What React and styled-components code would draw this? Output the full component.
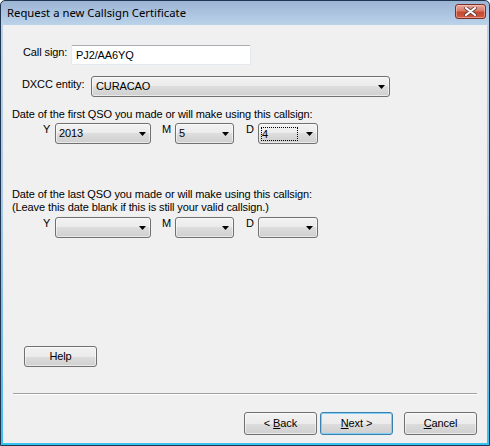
import React from 'react'
import styled, { createGlobalStyle, css } from 'styled-components'

const GlobalStyle = createGlobalStyle`
    html, body {
        margin: 0;
        padding: 0;
        background: #fff;
    }
    * {
        box-sizing: border-box;
    }
`

const Window = styled.div`
    width: 490px;
    height: 446px;
    display: flex;
    flex-direction: column;
    border: 1px solid #1f3550;
    border-radius: 5px 5px 0 0;
    overflow: hidden;
    background: linear-gradient(
        to bottom,
        #9cb5d4 0px,
        #bbd2ea 24px,
        #a8c9e6 45%,
        #6fb8e6 80%,
        #36c2ef 100%
    );
`

const TitleBar = styled.div`
    flex: none;
    height: 24px;
    display: flex;
    align-items: flex-start;
    justify-content: space-between;
    padding: 0 3px 0 6px;
`

const Title = styled.div`
    font-family: 'Noto Sans', 'Open Sans', sans-serif;
    font-size: 11.3px;
    line-height: 16px;
    margin-top: 4px;
    color: #000;
`

const CloseButton = styled.div`
    width: 31px;
    height: 15px;
    margin-top: 3px;
    display: flex;
    align-items: center;
    justify-content: center;
    border: 1px solid #7a2e25;
    border-radius: 3px;
    background: linear-gradient(to bottom, #e9a99b 0%, #d87a69 45%, #c8472f 55%, #cf5b45 100%);
    box-shadow: inset 0 0 0 1px rgba(255, 220, 210, 0.45);
`

const Body = styled.div`
    flex: 1;
    margin: 0 2px 2px;
    display: flex;
    flex-direction: column;
    background: #f0f0f0;
    font-family: 'Liberation Sans', Arial, sans-serif;
    font-size: 11px;
    line-height: 13px;
    letter-spacing: -0.1px;
    color: #000;
`

const FieldRow = styled.div`
    display: flex;
    align-items: flex-start;
    margin-top: ${(p) => p.$top}px;
    margin-left: ${(p) => p.$left}px;
`

const Label = styled.div`
    flex: none;
    width: ${(p) => p.$width}px;
    padding-top: ${(p) => p.$pad || 0}px;
    white-space: nowrap;
`

const Heading = styled.div`
    margin-top: ${(p) => p.$top}px;
    margin-left: 9px;
    white-space: nowrap;
`

const TextBox = styled.div`
    width: ${(p) => p.$width}px;
    height: 20px;
    display: flex;
    align-items: center;
    padding-left: 4px;
    background: #fff;
    border: 1px solid #e3e9ef;
    border-top-color: #abadb3;
    border-radius: 2px;
`

const win7Face = css`
    border: 1px solid #707070;
    border-radius: 3px;
    background: linear-gradient(to bottom, #f2f2f2 0%, #ebebeb 50%, #dddddd 50%, #cfcfcf 100%);
    box-shadow: inset 0 0 0 1px rgba(255, 255, 255, 0.55);
`

const Combo = styled.div`
    ${win7Face}
    flex: none;
    width: ${(p) => p.$width}px;
    height: 21px;
    display: flex;
    align-items: center;
    justify-content: space-between;
    padding: 0 4px 0 ${(p) => p.$pad}px;
`

const ComboValue = styled.div`
    white-space: nowrap;
    ${(p) =>
        p.$focus &&
        css`
            align-self: stretch;
            width: 37px;
            margin: 3px 0 2px -1px;
            border: 1px dotted #000;
            line-height: 13px;
            padding-left: 0;
        `}
`

const Arrow = () => (
    <svg width="7" height="4" viewBox="0 0 7 4">
        <path d="M0 0H7L3.5 4Z" fill="#000" />
    </svg>
)

const DateLabel = styled.div`
    flex: none;
    width: ${(p) => p.$width}px;
    margin-left: ${(p) => p.$gap || 0}px;
`

const Footer = styled.div`
    margin-top: auto;
    display: flex;
    flex-direction: column;
`

const Button = styled.div`
    ${win7Face}
    width: ${(p) => p.$width || 73}px;
    height: ${(p) => p.$height || 23}px;
    display: flex;
    align-items: center;
    justify-content: center;
    margin-left: ${(p) => p.$gap || 0}px;
    ${(p) =>
        p.$default &&
        css`
            border-color: #3c7fb1;
            box-shadow: inset 0 0 0 1px #7fd0f4;
        `}
`

const HelpRow = styled.div`
    display: flex;
    margin-left: 21px;
`

const Separator = styled.div`
    margin: 26px 10px 0;
    height: 2px;
    border-top: 1px solid #a0a0a0;
    border-bottom: 1px solid #ffffff;
`

const ButtonRow = styled.div`
    display: flex;
    justify-content: flex-end;
    margin-top: 17px;
    padding: 0 10px 8px 0;
`

const DateRow = ({ top, y, m, d, focusDay }) => (
    <FieldRow $top={top} $left={40}>
        <DateLabel $width={12}>Y</DateLabel>
        <Combo $width={96} $pad={3}>
            <ComboValue>{y}</ComboValue>
            <Arrow />
        </Combo>
        <DateLabel $width={13} $gap={11}>M</DateLabel>
        <Combo $width={59} $pad={3}>
            <ComboValue>{m}</ComboValue>
            <Arrow />
        </Combo>
        <DateLabel $width={12} $gap={12}>D</DateLabel>
        <Combo $width={60} $pad={3}>
            <ComboValue $focus={focusDay}>{d}</ComboValue>
            <Arrow />
        </Combo>
    </FieldRow>
)

const App = () => {
    return (
        <>
            <GlobalStyle />
            <Window>
                <TitleBar>
                    <Title>Request a new Callsign Certificate</Title>
                    <CloseButton>
                        <svg width="13" height="9" viewBox="0 0 13 9">
                            <path
                                d="M2 1L11 8M11 1L2 8"
                                stroke="#5a3a36"
                                strokeWidth="3.6"
                                strokeLinecap="round"
                            />
                            <path
                                d="M2 1L11 8M11 1L2 8"
                                stroke="#ffffff"
                                strokeWidth="2.2"
                                strokeLinecap="round"
                            />
                        </svg>
                    </CloseButton>
                </TitleBar>
                <Body>
                    <FieldRow $top={20} $left={20}>
                        <Label $width={48} $pad={1}>
                            Call sign:
                        </Label>
                        <TextBox $width={180}>PJ2/AA6YQ</TextBox>
                    </FieldRow>
                    <FieldRow $top={11} $left={19}>
                        <Label $width={69} $pad={2}>
                            DXCC entity:
                        </Label>
                        <Combo $width={299} $pad={4}>
                            <ComboValue>CURACAO</ComboValue>
                            <Arrow />
                        </Combo>
                    </FieldRow>
                    <Heading $top={11}>Date of the first QSO you made or will make using this callsign:</Heading>
                    <DateRow top={2} y="2013" m="5" d="4" focusDay />
                    <Heading $top={44}>
                        Date of the last QSO you made or will make using this callsign:
                        <br />
                        (Leave this date blank if this is still your valid callsign.)
                    </Heading>
                    <DateRow top={3} y="" m="" d="" />
                    <Footer>
                        <HelpRow>
                            <Button $width={73} $height={21}>
                                Help
                            </Button>
                        </HelpRow>
                        <Separator />
                        <ButtonRow>
                            <Button>
                                &lt;&nbsp;<u>B</u>ack
                            </Button>
                            <Button $gap={3} $default>
                                <u>N</u>ext &gt;
                            </Button>
                            <Button $gap={11}>
                                <u>C</u>ancel
                            </Button>
                        </ButtonRow>
                    </Footer>
                </Body>
            </Window>
        </>
    )
}

export default App
